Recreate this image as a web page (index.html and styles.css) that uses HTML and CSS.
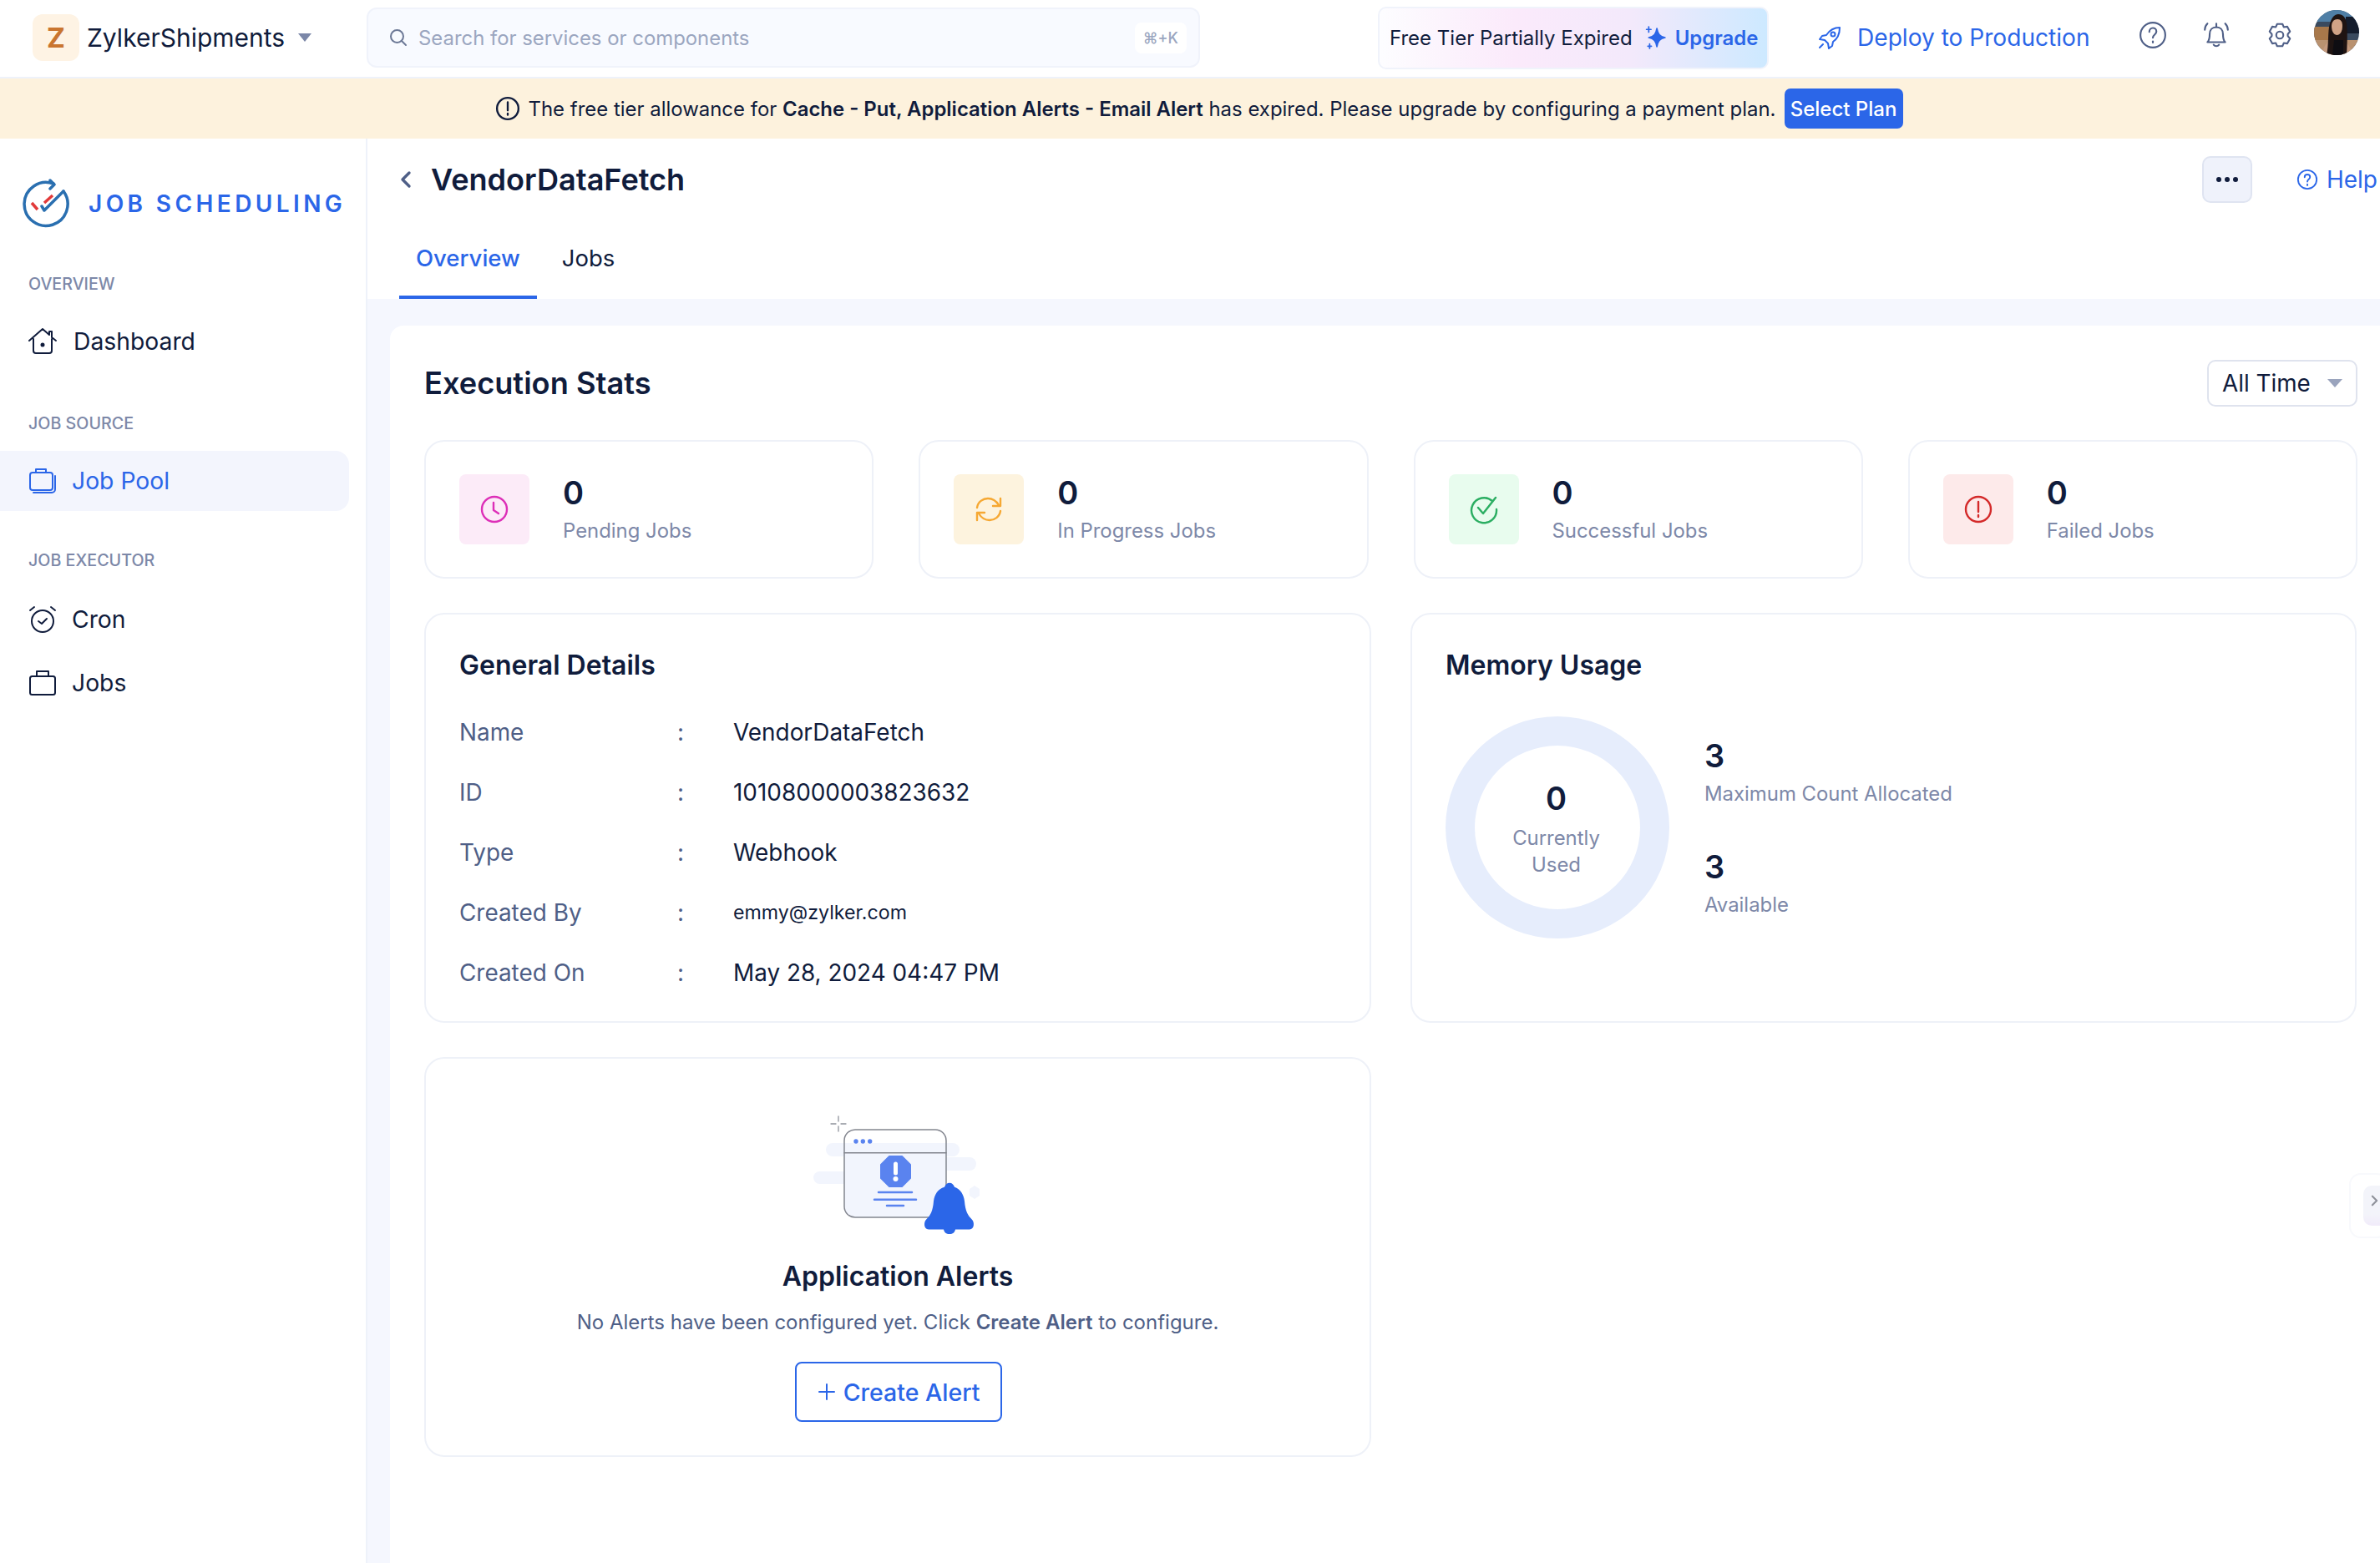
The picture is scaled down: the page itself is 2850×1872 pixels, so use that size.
FILE: index.html
```html
<!DOCTYPE html>
<html lang="en">
<head>
<meta charset="utf-8">
<title>VendorDataFetch</title>
<link rel="stylesheet" href="styles.css">
</head>
<body>
<div class="app">
  <header class="topbar">
    <div class="brand">
      <span class="org-logo">Z</span>
      <span class="org-name">ZylkerShipments</span>
      <span class="caret"></span>
    </div>
    <div class="search">
      <svg class="search-icon" viewBox="0 0 24 24"><circle cx="10.5" cy="10.5" r="7.5"/><path d="M16 16l5 5"/></svg>
      <span class="search-text">Search for services or components</span>
      <span class="kbd">⌘+K</span>
    </div>
    <div class="upgrade">
      <span class="upgrade-text">Free Tier Partially Expired</span>
      <svg class="spark" viewBox="0 0 24 30"><path d="M13 5c1 6 3 9 9 10-6 1-8 4-9 10-1-6-3-9-9-10 6-1 8-4 9-10z"/><path d="M4 3v6M1.500 6h5M5 22v5M3 24.500h4"/></svg>
      <span class="upgrade-link">Upgrade</span>
    </div>
    <div class="deploy">
      <svg viewBox="0 0 32 32" class="rocket"><path d="M28 4c-7 0-12 3-16 9l-5 1-3 4 6 1 4 4 1 6 4-3 1-5c6-4 8-10 8-17z"/><circle cx="20" cy="12" r="2.500"/><path d="M8 24l-4 4"/></svg>
      <span>Deploy to Production</span>
    </div>
    <svg class="tool" viewBox="0 0 32 32"><circle cx="16" cy="16" r="14"/><path d="M12 12.500c0-3 2-4.500 4-4.500s4 1.500 4 4c0 3.500-4 3.500-4 7"/><path d="M16 23v1.500"/></svg>
    <svg class="tool" viewBox="0 0 32 32"><path d="M6 24c2-2 2.500-4 2.500-9 0-5 3-8 7.500-8s7.500 3 7.500 8c0 5 .5 7 2.500 9z"/><path d="M13 27c1.500 2 4.500 2 6 0M16 3v4M6 3C4 5 3 7 3 10M26 3c2 2 3 4 3 7"/></svg>
    <svg class="tool" viewBox="0 0 32 32"><path d="M13 3.500h6l1.500 3.500 4-.500 3 5.500-2.500 3 .0 2 2.500 3-3 5.500-4-.500-1.500 3.500h-6l-1.500-3.500-4 .500-3-5.500 2.500-3v-2l-2.500-3 3-5.500 4 .500z" stroke-linejoin="round"/><circle cx="16" cy="16" r="4"/></svg>
    <svg class="avatar" viewBox="0 0 54 54">
      <defs><clipPath id="av"><circle cx="27" cy="27" r="27"/></clipPath></defs>
      <g clip-path="url(#av)">
        <rect width="54" height="54" fill="#3a4a5e"/>
        <rect y="0" width="54" height="14" fill="#4f7fa6"/>
        <rect y="20" width="18" height="16" fill="#a8784a"/>
        <rect x="38" y="8" width="16" height="20" fill="#141c2c"/>
        <rect y="36" width="54" height="18" fill="#b99270"/>
        <path d="M10 54c0-10 6-16 10-18h14c5 2 10 8 12 18z" fill="#c49a7e"/>
        <path d="M15 54c3-12 1-28 4-38 2-7 6-11 10-11 6 0 9 4 10 11 1 9 1 20 0 38z" fill="#1f1412"/>
        <path d="M21 19c0-5 3-8 7-8 4 0 6 3 6 8 0 7-3 11-6.500 11S21 26 21 19z" fill="#d1a386"/>
        <path d="M24 36h11v18H22z" fill="#0e0d12"/>
      </g>
    </svg>
  </header>

  <div class="banner">
    <svg class="banner-icon" viewBox="0 0 28 28"><circle cx="14" cy="14" r="12"/><path d="M14 7v9M14 19.500v1.500"/></svg>
    <span class="banner-text">The free tier allowance for <b>Cache - Put, Application Alerts - Email Alert</b> has expired. Please upgrade by configuring a payment plan.</span>
    <span class="banner-btn">Select Plan</span>
  </div>

  <div class="main">
    <aside class="sidebar">
      <div class="logo-row">
        <svg class="logo" viewBox="0 0 60 60">
          <path class="logo-line" d="M50 15A26 26 0 1 1 38 6"/>
          <path class="logo-line" d="M34 2l5 5-5 5M24 33l3 5 23-23"/>
          <path class="logo-red" d="M12 29l7 8M27 29l10-9"/>
        </svg>
        <span class="logo-text">JOB SCHEDULING</span>
      </div>
      <div class="nav-label first">OVERVIEW</div>
      <div class="nav-item">
        <svg class="nav-icon" viewBox="0 0 34 34"><path d="M1 16L17 2l8 7V5h3v7l5 4M6 14v14a3 3 0 0 0 3 3h16a3 3 0 0 0 3-3V14"/><circle class="dot" cx="17" cy="21" r="1.500"/></svg>
        <span class="nav-text wide">Dashboard</span>
      </div>
      <div class="nav-label second">JOB SOURCE</div>
      <div class="nav-item active">
        <svg class="nav-icon" viewBox="0 0 34 34"><rect x="2" y="7" width="27" height="21" rx="3"/><path d="M9 7V3h12v4M32 11v16a4 4 0 0 1-4 4H6"/></svg>
        <span class="nav-text">Job Pool</span>
      </div>
      <div class="nav-label third">JOB EXECUTOR</div>
      <div class="nav-item">
        <svg class="nav-icon" viewBox="0 0 34 34"><circle cx="17" cy="19" r="13"/><path d="M12 19l4 3 6-6M2 6l5-4M32 6l-5-4"/></svg>
        <span class="nav-text">Cron</span>
      </div>
      <div class="nav-item">
        <svg class="nav-icon" viewBox="0 0 34 34"><rect x="2" y="9" width="30" height="22" rx="2.500"/><path d="M10 9V3h14v6"/></svg>
        <span class="nav-text">Jobs</span>
      </div>
    </aside>

    <main class="content">
      <div class="page-head">
        <div class="title-row">
          <svg class="back" viewBox="0 0 16 24"><path d="M12 4l-8 8 8 8"/></svg>
          <h1 class="page-title">VendorDataFetch</h1>
          <span class="more"><i></i><i></i><i></i></span>
          <span class="help">
            <svg viewBox="0 0 28 28"><circle cx="14" cy="14" r="12"/><path d="M10.500 11c0-2.500 1.500-3.500 3.500-3.500s3.500 1.200 3.500 3.300c0 3-3.500 3-3.500 6M14 20v1.500"/></svg>
            Help
          </span>
        </div>
        <nav class="tabs">
          <span class="tab on">Overview</span>
          <span class="tab">Jobs</span>
        </nav>
      </div>

      <div class="canvas">
        <div class="sheet">
          <div class="sheet-head">
            <h2 class="sheet-title">Execution Stats</h2>
            <span class="select">All Time<span class="caret"></span></span>
          </div>

          <div class="stats">
            <div class="card stat">
              <span class="stat-icon pink"><svg viewBox="0 0 36 36"><circle cx="18" cy="18" r="15"/><path d="M17 10v9l6 4"/></svg></span>
              <div><div class="num">0</div><div class="muted">Pending Jobs</div></div>
            </div>
            <div class="card stat">
              <span class="stat-icon amber"><svg viewBox="0 0 36 36"><path d="M4 16C5 9 11 5 17 5c6 0 10 3 13 8"/><path d="M32 5v9h-9M32 20c-1 7-7 11-13 11-6 0-10-3-13-8"/><path d="M4 31v-9h9"/></svg></span>
              <div><div class="num">0</div><div class="muted">In Progress Jobs</div></div>
            </div>
            <div class="card stat">
              <span class="stat-icon green"><svg viewBox="0 0 36 36"><path d="M28 8a15 15 0 1 0 5 10"/><path d="M11 16l6 7L32 4"/></svg></span>
              <div><div class="num">0</div><div class="muted">Successful Jobs</div></div>
            </div>
            <div class="card stat">
              <span class="stat-icon red"><svg viewBox="0 0 36 36"><circle cx="18" cy="18" r="15"/><path d="M18 9v12M18 25v2"/></svg></span>
              <div><div class="num">0</div><div class="muted">Failed Jobs</div></div>
            </div>
          </div>

          <div class="panels">
            <section class="card details">
              <h3 class="card-title">General Details</h3>
              <dl class="rows">
                <dt>Name</dt><dd class="colon">:</dd><dd>VendorDataFetch</dd>
                <dt>ID</dt><dd class="colon">:</dd><dd>10108000003823632</dd>
                <dt>Type</dt><dd class="colon">:</dd><dd>Webhook</dd>
                <dt>Created By</dt><dd class="colon">:</dd><dd class="small">emmy@zylker.com</dd>
                <dt>Created On</dt><dd class="colon">:</dd><dd>May 28, 2024 04:47 PM</dd>
              </dl>
            </section>
            <section class="card memory">
              <h3 class="card-title">Memory Usage</h3>
              <div class="mem-body">
                <div class="ring">
                  <div class="num">0</div>
                  <div class="muted ring-label">Currently<br>Used</div>
                </div>
                <div class="mem-facts">
                  <div class="fact"><div class="num">3</div><div class="muted">Maximum Count Allocated</div></div>
                  <div class="fact"><div class="num">3</div><div class="muted">Available</div></div>
                </div>
              </div>
            </section>
            <section class="card alerts">
              <svg class="art" viewBox="0 0 240 150">
                <rect x="34" y="39" width="160" height="16" rx="8" fill="#f2f5fd"/>
                <rect x="19" y="73" width="60" height="15" rx="7.500" fill="#f2f5fd"/>
                <rect x="170" y="56" width="44" height="16" rx="8" fill="#f2f5fd"/>
                <path d="M212 90l6 4v8l-6 4-6-4v-8z" fill="#f2f5fd"/>
                <path d="M56 51h122v64a13 13 0 0 1-13 13H69a13 13 0 0 1-13-13z" fill="#f2f5fd"/>
                <rect x="56" y="23" width="122" height="105" rx="13" fill="none" stroke="#83868f" stroke-width="1.500"/>
                <path d="M56 50.700h122" stroke="#83868f" stroke-width="1.500"/>
                <circle cx="70" cy="37" r="2.700" fill="#5a83ef"/><circle cx="78.300" cy="37" r="2.700" fill="#5a83ef"/><circle cx="86.700" cy="37" r="2.700" fill="#5a83ef"/>
                <path d="M110 55h15l10 10v16l-10 10h-15l-10-10V65z" fill="#5a83ef" stroke="#5a83ef" stroke-width="2" stroke-linejoin="round"/>
                <path d="M117.500 64v11" stroke="#fff" stroke-width="5" stroke-linecap="round"/><circle cx="117.500" cy="82" r="3" fill="#fff"/>
                <path d="M97 98h40M92 106.700h50M107 114h20" stroke="#5a83ef" stroke-width="2.500" stroke-linecap="round"/>
                <path d="M49 7v6M49 19v6M40 16h6M52 16h6" stroke="#8f929b" stroke-width="1.300"/>
                <path d="M182 86.700c3 0 5 2 6 5 7 2 11 9 12 17 1 12 4 17 9 22 3 3 3 11.700-3 11.700H189c-1 4-3 5.500-7 5.500s-6-1.500-7-5.500H157c-6 0-6-8.700-3-11.700 5-5 8-10 9-22 1-8 5-15 13-17 1-3 3-5 6-5z" fill="#2b66e8"/>
              </svg>
              <h3 class="alerts-title">Application Alerts</h3>
              <p class="alerts-desc">No Alerts have been configured yet. Click <b>Create Alert</b> to configure.</p>
              <span class="outline-btn"><svg viewBox="0 0 22 22"><path d="M11 2v18M2 11h18"/></svg>Create Alert</span>
            </section>
          </div>
          <span class="handle"><span class="handle-in"><svg viewBox="0 0 10 16"><path d="M2 2l6 6-6 6"/></svg></span></span>
        </div>
      </div>
    </main>
  </div>
</div>
</body>
</html>
```
FILE: styles.css
```css
* { box-sizing: border-box; }
html, body { margin: 0; padding: 0; }
body { font-family: Inter, "Liberation Sans", sans-serif; color: #101c3c; background: #fff; }
h1, h2, h3, p, dl, dd { margin: 0; }
svg { fill: none; stroke: currentColor; stroke-width: 2; stroke-linecap: round; stroke-linejoin: round; flex: none; display: block; }

.app { width: 2850px; height: 1872px; display: flex; flex-direction: column; overflow: hidden; }

/* top bar */
.topbar { height: 94px; border-bottom: 2px solid #eef2fa; display: flex; align-items: center; padding: 0 24px 2px 39px; flex: none; }
.brand { display: flex; align-items: center; width: 400px; flex: none; }
.org-logo { width: 56px; height: 56px; border-radius: 12px; background: #fef3e4; color: #c9752f; font-size: 33px; font-weight: 700; display: flex; align-items: center; justify-content: center; }
.org-name { margin-left: 9px; font-size: 30px; }
.caret { width: 0; height: 0; border-left: 8px solid transparent; border-right: 8px solid transparent; border-top: 10px solid #7b87a8; margin-left: 16px; }
.search { width: 998px; height: 72px; flex: none; background: #f8faff; border: 2px solid #f0f3fb; border-radius: 12px; display: flex; align-items: center; padding: 0 14px 0 24px; }
.search-icon { width: 24px; height: 24px; color: #6c7896; }
.search-text { font-size: 23.900px; color: #9ba6c0; margin-left: 12px; flex: 1; }
.kbd { background: #fff; border-radius: 8px; font-size: 18px; font-weight: 500; color: #9ba6c0; padding: 8px 10px; }
.upgrade { margin-left: 213px; width: 468px; height: 75px; flex: none; display: flex; align-items: center; border: 2px solid #f0f3fb; border-radius: 10px; padding: 0 12px; background: linear-gradient(90deg, #fdfdff 0%, #fbeafb 35%, #f3e9fb 65%, #cde9ff 100%); }
.upgrade-text { font-size: 24px; white-space: nowrap; }
.spark { width: 26px; height: 34px; color: #2b66e8; margin-left: 15px; stroke-width: 1.600; }
.spark path:first-child { fill: #2b66e8; }
.upgrade-link { margin-left: 10px; font-size: 24px; font-weight: 600; color: #2b66e8; }
.deploy { margin-left: 57px; width: 344px; flex: none; display: flex; align-items: center; gap: 17px; color: #2b66e8; font-size: 28.100px; white-space: nowrap; }
.rocket { width: 32px; height: 32px; }
.tool { width: 34px; height: 34px; color: #4f5f87; margin-right: 42px; margin-top: -6px; }
.avatar { width: 54px; height: 54px; margin-left: -18px; margin-top: -13px; stroke: none; }
.deploy + .tool { margin-left: 42px; }

/* banner */
.banner { height: 72px; flex: none; background: #fdf2dd; display: flex; align-items: center; justify-content: center; padding-left: 21px; }
.banner-icon { width: 30px; height: 30px; stroke-width: 2.200; margin-right: 10px; }
.banner-text { font-size: 23.950px; white-space: nowrap; }
.banner-text b { font-weight: 600; }
.banner-btn { margin-left: 10px; height: 48px; width: 142px; background: #2b66e8; color: #fff; font-size: 24px; font-weight: 500; border-radius: 7px; display: flex; align-items: center; justify-content: center; }

/* layout */
.main { flex: 1; display: flex; min-height: 0; }
.sidebar { width: 440px; flex: none; border-right: 2px solid #eef2fa; padding-top: 48px; }
.logo-row { display: flex; align-items: center; padding-left: 26px; height: 60px; }
.logo { width: 60px; height: 60px; stroke-width: 3.500; color: #2a6fb0; }
.logo-red { color: #e23a3a; stroke-linecap: butt; }
.logo-text { font-size: 28px; font-weight: 600; color: #2b66e8; letter-spacing: 4.400px; margin-left: 20px; white-space: nowrap; }
.nav-label { font-size: 19.700px; font-weight: 500; color: #7d88a8; padding-left: 34px; line-height: 26px; }
.nav-label.first { margin-top: 53px; }
.nav-label.second { margin-top: 49px; }
.nav-label.third { margin-top: 46px; }
.nav-item { height: 72px; width: 418px; display: flex; align-items: center; padding-left: 34px; border-radius: 0 16px 16px 0; font-size: 28.300px; }
.nav-label + .nav-item { margin-top: 20px; }
.nav-label.third + .nav-item { margin-top: 22px; }
.nav-item + .nav-item { margin-top: 4px; }
.nav-item.active { background: #f3f5fd; color: #2b66e8; }
.nav-icon { width: 34px; height: 34px; stroke-width: 2; }
.dot { fill: currentColor; }
.nav-text { margin-left: 18px; }
.nav-text.wide { margin-left: 20px; }

/* content */
.content { flex: 1; display: flex; flex-direction: column; min-width: 0; }
.page-head { height: 192px; flex: none; padding-left: 38px; }
.title-row { display: flex; align-items: center; height: 98px; }
.back { width: 16px; height: 24px; color: #4f5f87; stroke-width: 3.400; }
.page-title { font-size: 36.100px; font-weight: 600; margin-left: 22px; flex: 1; }
.more { width: 60px; height: 56px; background: #eff2fb; border: 2px solid #dfe4f1; border-radius: 10px; display: flex; gap: 4px; align-items: center; justify-content: center; margin-right: 53px; }
.more i { width: 6px; height: 6px; background: #101c3c; border-radius: 50%; }
.help { display: flex; align-items: center; gap: 10px; font-size: 28px; color: #2b66e8; white-space: nowrap; margin-right: 3px; }
.help svg { width: 26px; height: 26px; }
.tabs { display: flex; height: 94px; padding-top: 26px; }
.tab { font-size: 27.500px; padding: 0 20px 26px; height: 68px; display: flex; align-items: center; border-bottom: 4px solid transparent; }
.tab.on { color: #2b66e8; font-weight: 500; border-bottom-color: #2b66e8; }
.tab + .tab { padding-left: 30px; }

.canvas { flex: 1; background: #f5f7fe; padding: 32px 0 0 27px; min-height: 0; }
.sheet { background: #fff; border-radius: 16px 0 0 0; height: 100%; padding: 0 27px 0 41px; position: relative; }
.sheet-head { height: 137px; display: flex; align-items: center; justify-content: space-between; }
.sheet-title { font-size: 36.200px; font-weight: 600; }
.select { width: 180px; height: 56px; border: 2px solid #dfe3ee; border-radius: 10px; display: flex; align-items: center; padding: 0 16px; font-size: 27.800px; justify-content: space-between; }
.select .caret { margin: 0; border-left-width: 9px; border-right-width: 9px; border-top-color: #9aa4bd; }

.card { background: #fff; border: 2px solid #eef1f8; border-radius: 24px; }
.stats { display: grid; grid-template-columns: repeat(4, 1fr); gap: 54px; }
.stat { height: 166px; display: flex; align-items: center; padding-left: 40px; gap: 40px; }
.stat-icon { width: 84px; height: 84px; border-radius: 8px; display: flex; align-items: center; justify-content: center; flex: none; }
.stat-icon svg { width: 36px; height: 36px; stroke-width: 2.400; }
.pink { background: #fcebf8; color: #dd2fb8; }
.amber { background: #fdf3de; color: #f6a833; }
.green { background: #e8fcee; color: #2bae62; }
.red { background: #fdeaea; color: #d42a2a; }
.num { font-size: 38px; font-weight: 600; line-height: 44px; }
.muted { font-size: 23.900px; color: #7d88a8; line-height: 32px; }
.stat .muted { margin-top: 8px; }

.panels { display: grid; grid-template-columns: 1134px 1133px; column-gap: 47px; row-gap: 41px; margin-top: 41px; }
.details { height: 491px; padding: 40px 40px; }
.memory { height: 491px; padding: 40px; }
.card-title { font-size: 32px; font-weight: 600; line-height: 42px; }
.rows { display: grid; grid-template-columns: 261px 67px 1fr; grid-auto-rows: 72px; margin-top: 23px; font-size: 27.900px; align-items: center; }
.rows dt { color: #4f5f87; }
.colon { color: #4f5f87; }
.rows .small { font-size: 23.200px; }
.mem-body { display: flex; margin-top: 40px; align-items: flex-start; }
.ring { width: 268px; height: 266px; flex: none; border-radius: 50%; border: 35px solid #e6edfc; display: flex; flex-direction: column; align-items: center; justify-content: center; text-align: center; padding: 4px 3px 0 0; }
.ring-label { margin-top: 10px; }
.mem-facts { margin-left: 42px; margin-top: 25px; display: flex; flex-direction: column; gap: 49px; }
.fact .muted { margin-top: 8px; }
.alerts { grid-column: 1; height: 479px; display: flex; flex-direction: column; align-items: center; padding-top: 62px; }
.art { width: 240px; height: 150px; stroke: none; }
.alerts-title { font-size: 32px; font-weight: 600; line-height: 42px; margin-top: 28px; }
.alerts-desc { font-size: 24px; color: #4f5f87; line-height: 32px; margin-top: 18px; }
.alerts-desc b { font-weight: 600; }
.outline-btn { margin: 31px 0 0 2px; width: 248px; height: 72px; border: 2px solid #2b66e8; border-radius: 8px; color: #2b66e8; font-size: 28.500px; font-weight: 500; display: flex; align-items: center; justify-content: center; gap: 9px; }
.outline-btn svg { width: 22px; height: 22px; }
.handle { position: absolute; right: -10px; top: 1015px; width: 47px; height: 78px; background: #fff; border: 2px solid #f8f9fc; border-radius: 14px; padding: 13px 0 0 15px; }
.handle-in { display: block; height: 48px; background: linear-gradient(180deg, #f3f4fa 70%, #f1ebfa 100%); border-radius: 10px 0 0 10px; padding: 11px 0 0 9px; }
.handle-in svg { width: 9px; height: 14px; color: #8f929b; stroke-width: 2.500; }
```
